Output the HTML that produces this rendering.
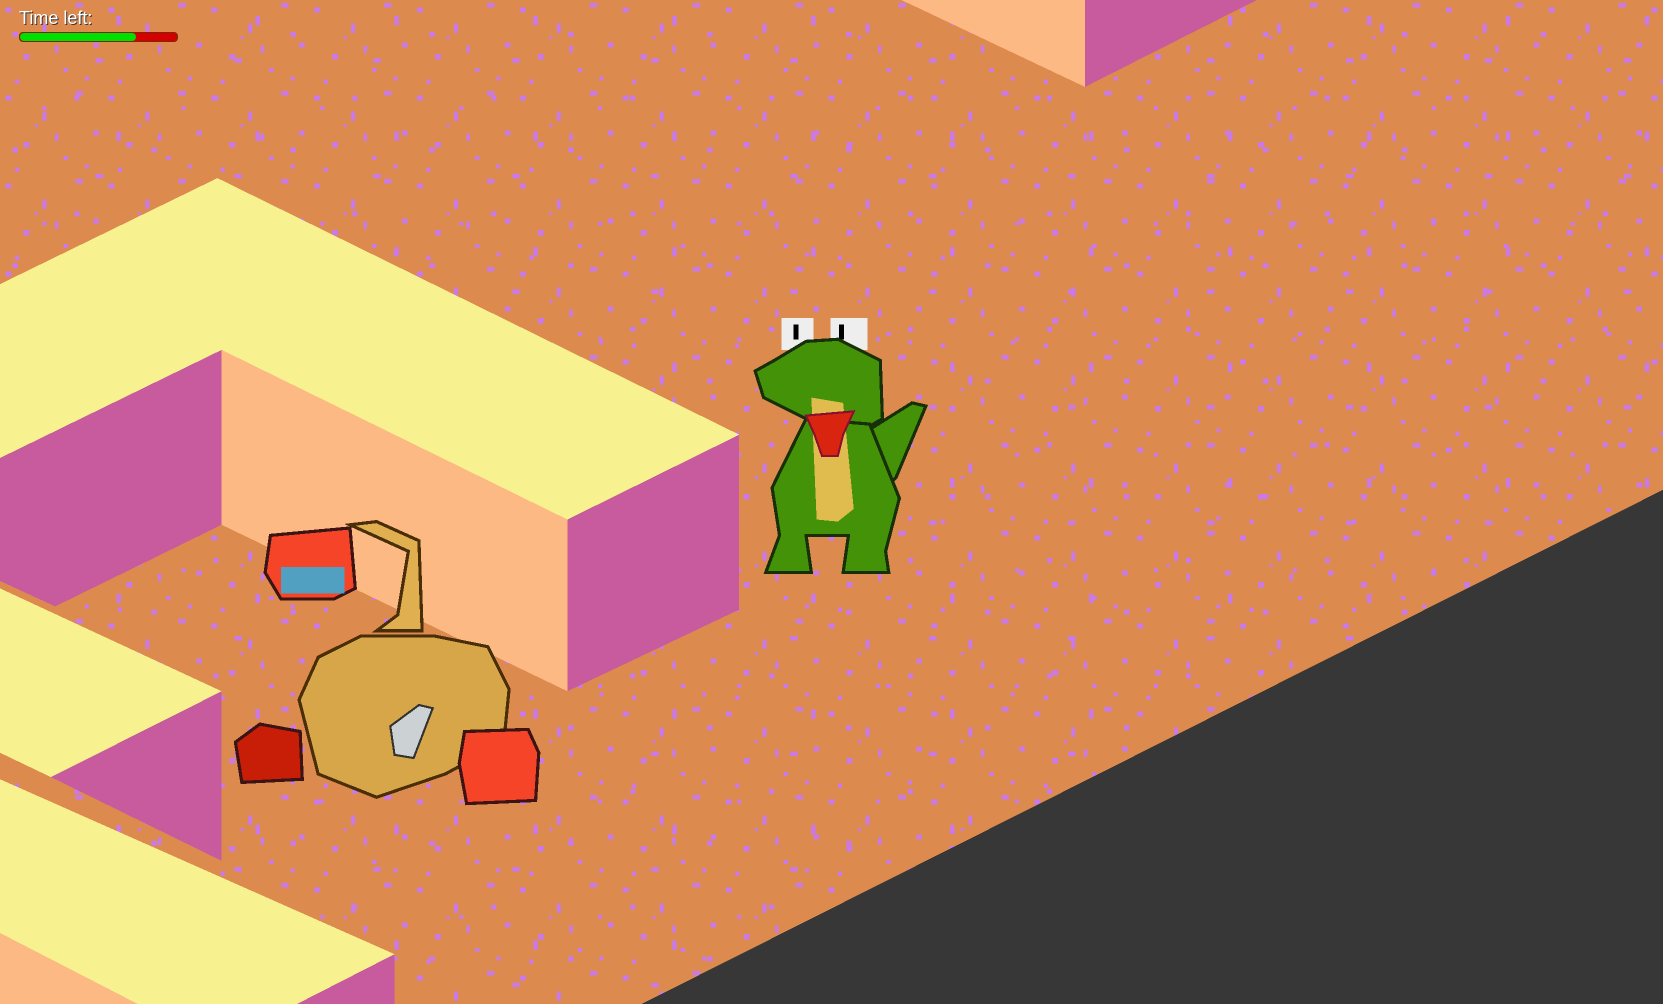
<!DOCTYPE html>
<html><head><meta charset="utf-8"><style>
html,body{margin:0;padding:0;overflow:hidden;background:#dd8a4f}
svg{display:block}
#hud{position:absolute;left:19px;top:8px;font-family:"Liberation Sans",sans-serif;font-size:18px;color:#fff;text-shadow:1px 1px 0 #333}
#bar{position:absolute;left:19px;top:32px;width:157px;height:8px;border-radius:4px;background:#d40000;border:1px solid #7a2a00;overflow:hidden}
#bar div{width:116px;height:100%;background:#00e000;border-radius:4px}
</style></head><body>
<svg width="1663" height="1004" viewBox="0 0 1568 947" preserveAspectRatio="none" shape-rendering="crispEdges">
<defs>
<pattern id="sp" width="97" height="83" patternUnits="userSpaceOnUse">
<rect x="5" y="7" width="6" height="5" fill="#c97ae6"/><rect x="40" y="22" width="4" height="9" fill="#c97ae6"/>
<rect x="71" y="3" width="7" height="4" fill="#c97ae6"/><rect x="22" y="51" width="6" height="5" fill="#c97ae6"/>
<rect x="60" y="64" width="4" height="4" fill="#c97ae6"/><rect x="88" y="40" width="5" height="5" fill="#c97ae6"/>
<rect x="14" y="75" width="4" height="4" fill="#c97ae6"/><rect x="52" y="43" width="3" height="7" fill="#c97ae6"/>
<rect x="80" y="72" width="4" height="4" fill="#c97ae6"/><rect x="33" y="34" width="3" height="3" fill="#c97ae6"/>
</pattern>
<pattern id="sp2" width="131" height="109" patternUnits="userSpaceOnUse">
<rect x="12" y="30" width="5" height="5" fill="#c97ae6"/><rect x="70" y="90" width="5" height="5" fill="#c97ae6"/>
<rect x="110" y="15" width="4" height="9" fill="#c97ae6"/><rect x="90" y="55" width="7" height="4" fill="#c97ae6"/>
<rect x="40" y="100" width="4" height="4" fill="#c97ae6"/>
</pattern>
</defs>
<rect width="1568" height="947" fill="#dd8a4f"/>
<rect width="1568" height="947" fill="url(#sp)"/>
<rect width="1568" height="947" fill="url(#sp2)"/>
<polygon points="850,0 1023,0 1023,82" fill="#fdb983"/>
<polygon points="1023,0 1185,0 1023,82" fill="#c85a9e"/>
<polygon points="0,268 205,168 697,410 535,490 209,330 0,432" fill="#f7f28f"/>
<polygon points="209,330 535,490 535,652 209,495" fill="#fdb983"/>
<polygon points="535,490 697,410 697,575 535,652" fill="#c85a9e"/>
<polygon points="0,432 209,330 209,495 52,572 0,548" fill="#c85a9e"/>
<polygon points="0,555 209,652 48,733 0,710" fill="#f7f28f"/>
<polygon points="48,733 209,652 209,812" fill="#c85a9e"/>
<polygon points="0,735 372,900 280,947 130,947 0,880" fill="#f7f28f"/>
<polygon points="0,880 130,947 0,947" fill="#fdb983"/>
<polygon points="280,947 372,900 372,947" fill="#c85a9e"/>
<polygon points="605,947 1568,462 1568,947" fill="#373737"/>
<g>
<rect x="737" y="300" width="30" height="30" fill="#eee"/><rect x="783" y="300" width="35" height="30" fill="#eee"/>
<rect x="748" y="306" width="5" height="14" fill="#000"/><rect x="791" y="306" width="5" height="14" fill="#000"/>
<path d="M760,322 L790,320 L830,340 L832,395 L815,405 L760,395 L720,375 L712,350 L730,340 Z" fill="#449208" stroke="#17300a" stroke-width="3"/>
<path d="M820,405 L860,380 L873,383 L845,450 L835,460 Z" fill="#449208" stroke="#17300a" stroke-width="3"/>
<path d="M760,395 L820,400 L848,470 L835,520 L838,540 L795,540 L800,505 L760,505 L765,540 L722,540 L735,505 L728,460 Z" fill="#449208" stroke="#17300a" stroke-width="3"/>
<path d="M765,375 L795,380 L805,480 L790,492 L770,490 Z" fill="#e0bb4d"/>
<path d="M760,392 L805,388 L795,410 L790,430 L775,430 L768,410 Z" fill="#d92410" stroke="#8a1030" stroke-width="2"/>
</g>
<g>
<path d="M330,495 L355,492 L395,510 L398,595 L355,595 L375,580 L385,520 Z" fill="#e0b050" stroke="#4a2e08" stroke-width="3"/>
<path d="M340,600 L410,600 L460,610 L480,650 L475,700 L420,730 L355,752 L300,730 L282,660 L300,620 Z" fill="#d6a648" stroke="#4a2e08" stroke-width="3"/>
<path d="M368,685 L395,665 L408,668 L390,715 L372,712 Z" fill="#ccd2d4" stroke="#333" stroke-width="2"/>
<path d="M255,505 L330,498 L335,555 L315,565 L265,565 L250,540 Z" fill="#f64428" stroke="#3d1414" stroke-width="3"/>
<rect x="265" y="535" width="60" height="25" fill="#28b8e8" opacity=".8"/>
<path d="M222,700 L245,683 L283,690 L285,735 L228,738 Z" fill="#c81e08" stroke="#3d1414" stroke-width="3"/>
<path d="M438,690 L498,688 L508,710 L505,755 L440,758 L433,720 Z" fill="#f64428" stroke="#3d1414" stroke-width="3"/>
</g>
</svg>
<div id="hud">Time left:</div>
<div id="bar"><div></div></div>
</body></html>
